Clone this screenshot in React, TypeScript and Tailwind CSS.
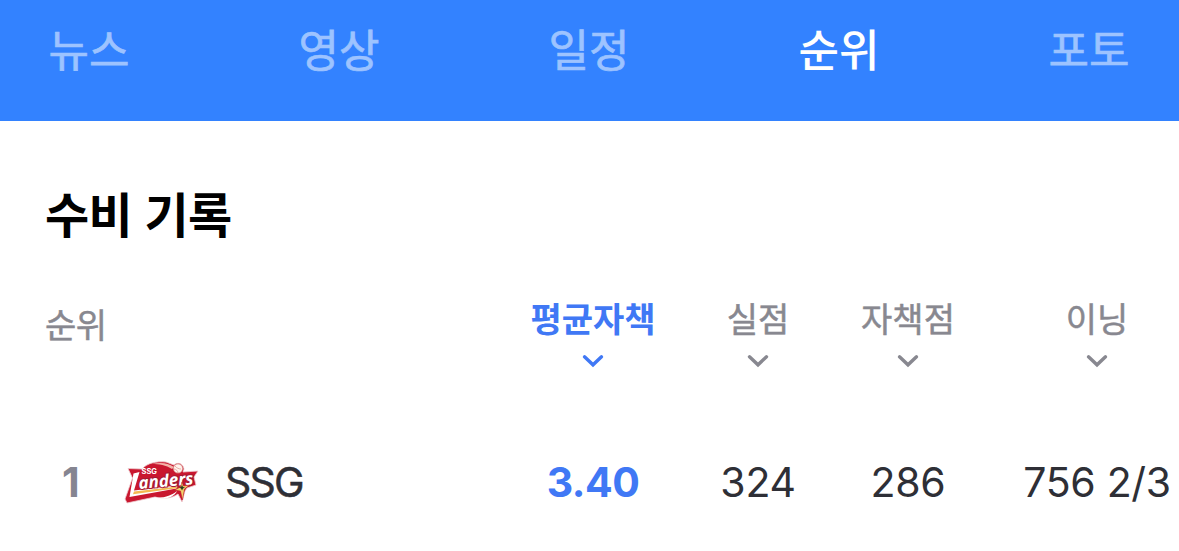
const tabs = ["뉴스", "영상", "일정", "순위", "포토"];

const columns = [
  { label: "평균자책", value: "3.40", active: true },
  { label: "실점", value: "324", active: false },
  { label: "자책점", value: "286", active: false },
  { label: "이닝", value: "756 2/3", active: false },
];

function ChevronIcon() {
  return (
    <svg width="22" height="14" viewBox="0 0 22 14" fill="none" className="mt-[9px]">
      <path
        d="M2.5 2.8 11 10.800l8.500-8"
        stroke="currentColor"
        strokeWidth="3.4"
        strokeLinecap="round"
        strokeLinejoin="miter"
      />
    </svg>
  );
}

function LandersLogo() {
  return (
    <svg width="76" height="46" viewBox="0 0 76 46" fill="none" className="overflow-visible">
      <path
        d="M4 8.500 18 9C23 3 33 1 42 2l8 3c3-3 9-2 10 4l-1 3 15-1-4 6 2 8-9 3-2 3-3 11-4-8c-7 5-16 5-23 3L3 43l-2-4L8.500 18z"
        fill="#c9172f"
        stroke="#edcdd1"
        strokeWidth=".8"
      />
      <path d="M28 4c9-2 16-1 22 3l-2 2C42 5 35 4 28 4z" fill="#f3b3aa" />
      <circle cx="54" cy="8.500" r="4.600" fill="#fff4ee" stroke="#d98e87" strokeWidth=".7" />
      <path d="M51 6c1.500 2 4 3 6 3M50 9c2 0 4 2 4 4" stroke="#d77d76" strokeWidth=".6" />
      <text
        x="17.5"
        y="14"
        fill="#fff"
        className="font-['Inter',sans-serif] text-[7px] font-bold"
        textLength="15.5"
        lengthAdjust="spacingAndGlyphs"
      >
        SSG
      </text>
      <path d="m9.500 13.500 6-1.500-5.500 18.500 43-5-.5 3-47 8.500z" fill="#fff" />
      <path d="m10 31.500 44-5-1.500 1.800-43.500 6z" fill="#f4b950" />
      <text
        x="15"
        y="29"
        transform="rotate(-5 15 29)"
        fill="#fff"
        stroke="#a31a31"
        strokeWidth="2"
        paintOrder="stroke"
        className="font-['Open_Sans',sans-serif] text-[17px] font-bold italic"
        textLength="55"
        lengthAdjust="spacingAndGlyphs"
      >
        anders
      </text>
      <path d="M28 37c10 2 19-1 25-6-3 7-14 10-25 6z" fill="#fff" />
      <path d="m58 22 1.500 4 6-1-5 4-2 11-2-9-6-1 6-3z" fill="#f3d36b" stroke="#b9152b" strokeWidth=".5" />
      <path d="m58 25 1 2 2 .5-2 1-1 2-1-2-2-1 2-.5z" fill="#273b20" />
    </svg>
  );
}

export default function App() {
  return (
    <div className="h-[551px] w-[1179px] overflow-hidden bg-white font-['Inter','Noto_Sans_CJK_KR',sans-serif]">
      <nav className="flex h-[121px] gap-[170px] bg-[#3382ff] pl-[49px]">
        {tabs.map((tab) => (
          <a
            key={tab}
            className={`flex h-[101px] w-20 shrink-0 items-center justify-center whitespace-nowrap text-[44px] leading-none ${
              tab === "순위"
                ? "font-medium text-white"
                : "text-[#9dc3ff] [-webkit-text-stroke:0.7px_#9dc3ff]"
            }`}
          >
            {tab}
          </a>
        ))}
      </nav>

      <h2 className="mt-[65px] pl-[45px] text-[48px] leading-[60px] font-bold tracking-[-0.7px] [word-spacing:2px] text-black">
        수비 기록
      </h2>

      <div className="mt-[49px] grid h-[90px] grid-cols-[503px_180px_150px_150px_228px] text-[34px] text-[#888890]">
        <div className="pt-[11px] pl-[45px] leading-[40px] tracking-[-0.5px] [-webkit-text-stroke:0.5px_#888890]">순위</div>
        {columns.map(({ label, active }) => (
          <div key={label} className={`flex flex-col items-center ${active ? "font-bold text-[#4078f5]" : ""}`}>
            <span className={`h-[50px] leading-[50px] ${active ? "" : "[-webkit-text-stroke:0.5px_#888890]"}`}>
              {label}
            </span>
            <ChevronIcon />
          </div>
        ))}
      </div>

      <div className="mt-[58px] grid h-[80px] grid-cols-[503px_180px_150px_150px_228px] items-center text-[41px] text-[#2e2f36]">
        <div className="flex items-center">
          <span className="w-[80px] pl-[62px] font-bold text-[#858591]">1</span>
          <div className="ml-[44px]">
            <LandersLogo />
          </div>
          <span className="ml-[25px] tracking-[-1.8px] [-webkit-text-stroke:0.5px_#2e2f36]">SSG</span>
        </div>
        {columns.map(({ label, value, active }) => (
          <span
            key={label}
            className={`text-center whitespace-nowrap ${
              active ? "font-bold tracking-[-0.5px] text-[#4078f5]" : "tracking-[-0.3px]"
            }`}
          >
            {value}
          </span>
        ))}
      </div>
    </div>
  );
}
